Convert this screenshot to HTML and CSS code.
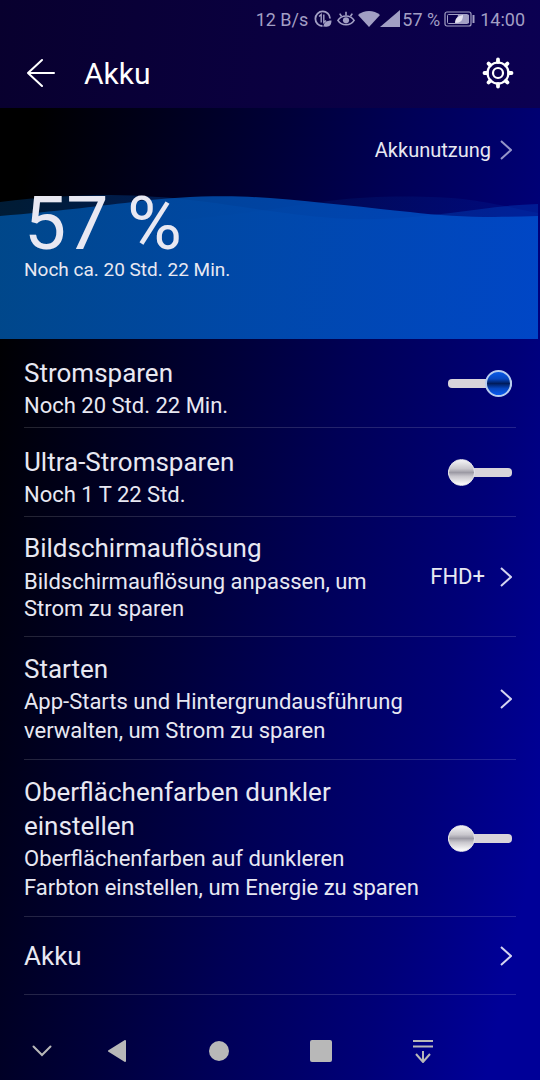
FILE: index.html
```html
<!DOCTYPE html>
<html lang="de">
<head>
<meta charset="utf-8">
<meta name="viewport" content="width=device-width, initial-scale=1">
<title>Akku</title>
<link rel="stylesheet" href="styles.css">
</head>
<body>
<div class="screen">
  <header class="top">
    <div class="status">
      <span class="rate">12 B/s</span>
      <svg class="data" width="18" height="18" viewBox="0 0 18 18" fill="none" stroke="currentColor">
        <path d="M8.500 16A7.300 7.300 0 1 1 16 8.500" stroke-width="1.800"/>
        <path d="M5 6.500L7.200 4.500v8M9.800 4.500v8l2.200-2" stroke-width="1.400"/>
        <path d="M9.500 17c0-4.500 3-6.500 8-6.500 0 4.500-2 7-7 6z" fill="currentColor" stroke="none"/>
      </svg>
      <svg class="eye" width="18" height="18" viewBox="0 0 20 18" fill="none" stroke="currentColor" stroke-width="1.800">
        <path d="M1 10.500c4-6.500 14-6.500 18 0-4 6.500-14 6.500-18 0z"/>
        <circle cx="10" cy="10.500" r="3.400" fill="currentColor" stroke="none"/>
        <path d="M10 5V1M5 6L3 3M15 6l2-3"/>
      </svg>
      <svg width="22" height="18" viewBox="0 0 22 18"><path d="M0 5C6-.5 16-.5 22 5L11 17z" fill="currentColor"/></svg>
      <svg width="20" height="18" viewBox="0 0 20 18"><path d="M0 17L20 0v17z" fill="currentColor"/></svg>
      <span class="percent">57 %</span>
      <svg class="cell" width="31" height="16" viewBox="0 0 31 16" fill="none" stroke="currentColor">
        <rect x="1" y="1" width="26" height="14" rx="2" stroke-width="1.200"/>
        <rect x="3.500" y="3.500" width="21" height="9" rx="1"/>
        <path d="M14 4h11v8H12z" fill="currentColor" stroke="none"/>
        <path d="M29.500 4v8" stroke-width="2"/>
        <path d="M11 12c0-5 3-7 8-8 0 5-2 8-8 8z" fill="#e4e2ef" stroke="none"/>
      </svg>
      <span>14:00</span>
    </div>
    <div class="bar">
      <button class="icon-button" aria-label="Zurück">
        <svg width="28" height="30" viewBox="0 0 28 30" fill="none" stroke="currentColor" stroke-width="2" stroke-linecap="round" stroke-linejoin="round"><path d="M27 15H1M15 2L1 15l14 13"/></svg>
      </button>
      <h1 class="title">Akku</h1>
      <button class="icon-button" aria-label="Einstellungen">
        <svg width="32" height="32" viewBox="0 0 32 32" fill="none" stroke="currentColor">
          <circle cx="16" cy="16" r="10.500" stroke-width="2.200"/>
          <circle cx="16" cy="16" r="5" stroke-width="2.200"/>
          <path d="M16 5V2.500M16 27v2.500M5 16H2.500M27 16h2.500M8.200 8.200L6.600 6.600M23.800 8.200l1.600-1.600M8.200 23.800l-1.600 1.600M23.800 23.800l1.600 1.600" stroke-width="3.800" stroke-linecap="round"/>
        </svg>
      </button>
    </div>
  </header>

  <main>
    <section class="level">
      <svg class="waves" viewBox="0 0 540 231" preserveAspectRatio="none" aria-hidden="true">
        <defs>
          <linearGradient id="water" gradientUnits="userSpaceOnUse" x1="0" y1="100" x2="540" y2="150">
            <stop offset="0" stop-color="#004f99"/>
            <stop offset=".5" stop-color="#004fb5"/>
            <stop offset="1" stop-color="#004dcd"/>
          </linearGradient>
        </defs>
        <g fill="url(#water)">
          <path opacity=".35" d="M0 94C40 89 75 87 110 87C180 88 220 96 270 103C320 110 350 112 380 111C440 109 490 97 538 96V231H0z"/>
          <path opacity=".12" d="M180 112C250 106 300 96 337 92C370 88 430 87 470 92C500 96 520 102 538 105V231H180z"/>
          <path opacity=".85" d="M0 108C60 103 90 99 133 94C180 88 230 87 270 90C320 94 370 100 410 104C450 109 490 110 538 108V231H0z"/>
        </g>
      </svg>
      <a class="usage" href="#nutzung">Akkunutzung
        <svg class="chevron" width="12" height="20" viewBox="0 0 12 20"><path d="M1 1l10 9-10 9"/></svg>
      </a>
      <p class="charge">57 %</p>
      <p class="remaining">Noch ca. 20 Std. 22 Min.</p>
    </section>

    <div class="list">
      <label class="row row-short">
        <span class="text"><span class="name">Stromsparen</span><span class="note">Noch 20 Std. 22 Min.</span></span>
        <input class="switch" type="checkbox" role="switch" checked>
      </label>
      <label class="row row-short">
        <span class="text"><span class="name">Ultra-Stromsparen</span><span class="note">Noch 1 T 22 Std.</span></span>
        <input class="switch" type="checkbox" role="switch">
      </label>
      <a class="row row-dense" href="#aufloesung">
        <span class="text"><span class="name">Bildschirmauflösung</span><span class="note">Bildschirmauflösung anpassen, um Strom zu sparen</span></span>
        <span class="value">FHD+</span>
        <svg class="chevron" width="12" height="20" viewBox="0 0 12 20"><path d="M1 1l10 9-10 9"/></svg>
      </a>
      <a class="row" href="#starten">
        <span class="text"><span class="name">Starten</span><span class="note">App-Starts und Hintergrundausführung verwalten, um Strom zu sparen</span></span>
        <svg class="chevron" width="12" height="20" viewBox="0 0 12 20"><path d="M1 1l10 9-10 9"/></svg>
      </a>
      <label class="row">
        <span class="text"><span class="name">Oberflächenfarben dunkler einstellen</span><span class="note">Oberflächenfarben auf dunkleren Farbton einstellen, um Energie zu sparen</span></span>
        <input class="switch" type="checkbox" role="switch">
      </label>
      <a class="row row-single" href="#akku">
        <span class="text"><span class="name">Akku</span></span>
        <svg class="chevron" width="12" height="20" viewBox="0 0 12 20"><path d="M1 1l10 9-10 9"/></svg>
      </a>
    </div>
  </main>

  <nav class="nav" aria-label="Navigation">
    <button class="icon-button hide" aria-label="Leiste ausblenden">
      <svg width="20" height="12" viewBox="0 0 20 12" fill="none" stroke="currentColor" stroke-width="2" stroke-linecap="round"><path d="M1.500 1.500L10 10l8.500-8.500"/></svg>
    </button>
    <button class="icon-button" aria-label="Zurück">
      <svg width="20" height="22" viewBox="0 0 20 22"><path d="M18 1v20L2 11z" fill="currentColor" stroke="currentColor" stroke-width="2" stroke-linejoin="round"/></svg>
    </button>
    <button class="icon-button" aria-label="Startseite">
      <svg width="20" height="20" viewBox="0 0 20 20"><circle cx="10" cy="10" r="10" fill="currentColor"/></svg>
    </button>
    <button class="icon-button" aria-label="Übersicht">
      <svg width="22" height="22" viewBox="0 0 22 22"><rect width="22" height="22" rx="2" fill="currentColor"/></svg>
    </button>
    <button class="icon-button" aria-label="Benachrichtigungen">
      <svg width="20" height="24" viewBox="0 0 20 24" fill="none" stroke="currentColor" stroke-width="2"><path d="M0 2h20M0 7.500h20M10 12v11M3 15l7 8 7-8"/></svg>
    </button>
  </nav>
</div>
</body>
</html>
```
FILE: styles.css
```css
*,
*::before,
*::after {
  box-sizing: border-box;
}

body {
  margin: 0;
  font-family: Roboto, "Noto Sans", sans-serif;
  color: #e8e8f2;
  background: #000;
}

.screen {
  display: flex;
  flex-direction: column;
  min-height: 100vh;
  background: linear-gradient(102deg, #000 8%, #00001c 24%, #00003a 41%, #000056 56%, #000078 77%, #000098 93%);
}

a {
  color: inherit;
  text-decoration: none;
}

svg {
  display: block;
  flex: none;
}

.icon-button {
  display: flex;
  justify-content: center;
  padding: 0;
  border: 0;
  background: none;
  color: inherit;
}

.top {
  background: linear-gradient(95deg, #08002e, #0a0040 50%, #0b0052);
}

.status {
  display: flex;
  align-items: center;
  justify-content: flex-end;
  height: 38px;
  padding-right: 15px;
  font-size: 18px;
  color: #a29fc4;
}

.data {
  margin: 0 5px 0 6px;
}

.eye {
  margin-right: 3px;
}

.percent {
  margin-left: 2px;
}

.cell {
  margin: 0 5px 0 4px;
}

.bar {
  display: flex;
  align-items: center;
  height: 70px;
  padding: 0 26px 0 27px;
  color: #fff;
}

.title {
  flex: 1;
  margin: 0 0 0 29px;
  font-size: 30px;
  font-weight: 400;
}

.level {
  position: relative;
  isolation: isolate;
  display: flex;
  flex-direction: column;
  padding: 28px 28px 57px 24px;
}

.waves {
  position: absolute;
  inset: 0;
  z-index: -1;
  width: 100%;
  height: 100%;
}

.usage {
  display: flex;
  align-items: center;
  gap: 9px;
  align-self: flex-end;
  font-size: 20px;
  line-height: 28px;
}

.usage .chevron {
  opacity: .7;
}

.charge {
  margin: 24px 0 0;
  font-size: 75px;
  line-height: 70px;
}

.remaining {
  margin: 0;
  font-size: 19px;
  line-height: 24px;
}

.chevron {
  fill: none;
  stroke: #d4d4f0;
  stroke-width: 2;
}

.list {
  padding: 0 24px;
}

.row {
  display: flex;
  align-items: center;
  padding: 15px 4px 14px 0;
  border-bottom: 1px solid rgba(255, 255, 255, .14);
}

.text {
  flex: 1;
  padding-right: 26px;
}

.name,
.note {
  display: block;
}

.name {
  font-size: 26px;
  line-height: 34px;
}

.note {
  margin-top: 1px;
  font-size: 22px;
  line-height: 29px;
}

.row-short {
  padding-top: 7px;
  padding-bottom: 7px;
}

.row-short .text {
  padding-top: 10px;
}

.row-dense {
  padding-top: 14px;
}

.row-dense .note {
  margin-top: 3px;
  line-height: 27px;
}

.row-single {
  padding-top: 22px;
  padding-bottom: 21px;
}

.value {
  margin-right: 15px;
  font-size: 22px;
}

.switch {
  appearance: none;
  display: grid;
  align-items: center;
  flex: none;
  width: 64px;
  height: 28px;
  margin: 0;
}

.switch::before,
.switch::after {
  content: "";
  grid-area: 1 / 1;
}

.switch::before {
  height: 9px;
  border-radius: 4px;
  background: #d8d4da;
}

.switch::after {
  width: 27px;
  height: 27px;
  border: 1px solid #e4e4ea;
  border-radius: 50%;
  background: linear-gradient(#f4f4f6, #c8c6cc 35%, #9c9aa4 50%, #c8c6cc 65%, #fff);
}

.switch:checked::after {
  justify-self: end;
  border: 2px solid #b8cdf0;
  background: linear-gradient(#0a5ae6, #0646c0 30%, #001c5c 50%, #0646c0 72%, #0a5cf0);
}

.nav {
  display: grid;
  grid-template-columns: 66fr 102fr 102fr 102fr 102fr 66fr;
  align-items: center;
  flex: 1;
  padding: 42px 0 16px;
  color: #b8b8b8;
}

.hide {
  padding-left: 18px;
}
```
